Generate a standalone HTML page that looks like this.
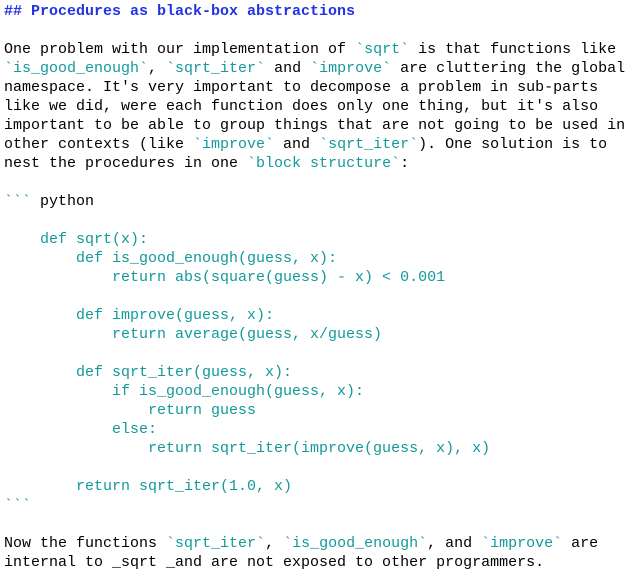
<!DOCTYPE html>
<html><head><meta charset="utf-8"><style>
html,body{margin:0;padding:0;background:#fff;width:635px;height:579px;overflow:hidden}
pre{margin:0;position:absolute;left:4px;top:2px;font-family:"Liberation Mono",monospace;font-size:15px;line-height:19px;color:#000}
.h{color:#2233e6;font-weight:bold}
.c{color:#13999a}
</style></head><body><pre><span class="h">## Procedures as black-box abstractions</span>

One problem with our implementation of <span class="c">&#96;sqrt&#96;</span> is that functions like
<span class="c">&#96;is_good_enough&#96;</span>, <span class="c">&#96;sqrt_iter&#96;</span> and <span class="c">&#96;improve&#96;</span> are cluttering the global
namespace. It's very important to decompose a problem in sub-parts
like we did, were each function does only one thing, but it's also
important to be able to group things that are not going to be used in
other contexts (like <span class="c">&#96;improve&#96;</span> and <span class="c">&#96;sqrt_iter&#96;</span>). One solution is to
nest the procedures in one <span class="c">&#96;block structure&#96;</span>:

<span class="c">&#96;&#96;&#96;</span> python
<span class="c">
    def sqrt(x):
        def is_good_enough(guess, x):
            return abs(square(guess) - x) &lt; 0.001

        def improve(guess, x):
            return average(guess, x/guess)

        def sqrt_iter(guess, x):
            if is_good_enough(guess, x):
                return guess
            else:
                return sqrt_iter(improve(guess, x), x)

        return sqrt_iter(1.0, x)
&#96;&#96;&#96;</span>

Now the functions <span class="c">&#96;sqrt_iter&#96;</span>, <span class="c">&#96;is_good_enough&#96;</span>, and <span class="c">&#96;improve&#96;</span> are
internal to _sqrt _and are not exposed to other programmers.</pre></body></html>
